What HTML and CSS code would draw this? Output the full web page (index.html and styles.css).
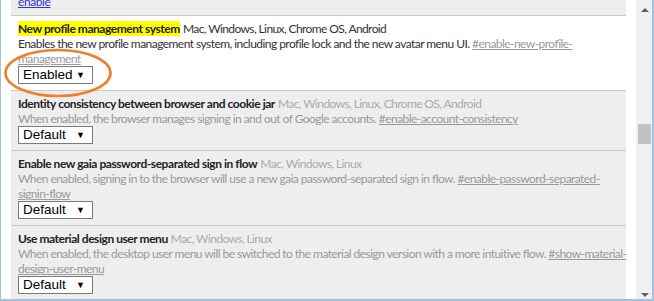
FILE: index.html
```html
<!DOCTYPE html>
<html>
<head>
<meta charset="utf-8">
<link rel="stylesheet" href="styles.css">
</head>
<body>
<div class="window">
  <div class="viewport">
    <div class="panel">
      <div class="row row-top"><a class="link-blue" href="#">enable</a></div>
      <div class="row row-hl">
        <div class="line"><span class="title"><mark class="find">New profile management system</mark></span> <span class="platforms">Mac, Windows, Linux, Chrome OS, Android</span></div>
        <div class="desc">Enables the new profile management system, including profile lock and the new avatar menu UI. <a class="permalink" href="#">#enable-new-profile-<br>management</a></div>
        <div class="select"><span class="select-text">Enabled</span><span class="arrow">▼</span></div>
      </div>
      <div class="row">
        <div class="line"><span class="title">Identity consistency between browser and cookie jar</span> <span class="platforms">Mac, Windows, Linux, Chrome OS, Android</span></div>
        <div class="desc">When enabled, the browser manages signing in and out of Google accounts. <a class="permalink" href="#">#enable-account-consistency</a></div>
        <div class="select"><span class="select-text">Default</span><span class="arrow">▼</span></div>
      </div>
      <div class="row">
        <div class="line"><span class="title">Enable new gaia password-separated sign in flow</span> <span class="platforms">Mac, Windows, Linux</span></div>
        <div class="desc">When enabled, signing in to the browser will use a new gaia password-separated sign in flow. <a class="permalink" href="#">#enable-password-separated-<br>signin-flow</a></div>
        <div class="select"><span class="select-text">Default</span><span class="arrow">▼</span></div>
      </div>
      <div class="row">
        <div class="line"><span class="title">Use material design user menu</span> <span class="platforms">Mac, Windows, Linux</span></div>
        <div class="desc">When enabled, the desktop user menu will be switched to the material design version with a more intuitive flow. <a class="permalink" href="#">#show-material-<br>design-user-menu</a></div>
        <div class="select"><span class="select-text">Default</span><span class="arrow">▼</span></div>
      </div>
    </div>
  </div>
  <div class="scrollbar">
    <div class="sb-arrow up"></div>
    <div class="sb-track"><div class="sb-thumb"></div></div>
    <div class="sb-arrow down"></div>
  </div>
  <svg class="ring" width="112" height="52" viewBox="0 0 112 52"><ellipse cx="55" cy="25" rx="52.5" ry="23" fill="none" stroke="#ee7f2d" stroke-width="2.6"/></svg>
</div>
</body>
</html>
```

FILE: styles.css
```css
* { box-sizing: border-box; }
html, body { margin: 0; padding: 0; background: #fff; }
body { font-family: "Lato", "Open Sans", sans-serif; font-size: 12px; }

.window {
  position: relative;
  width: 654px;
  height: 301px;
  display: flex;
  border-left: 1px solid #9ec2e6;
  border-right: 2px solid #9ec2e6;
  border-bottom: 2px solid #9ec2e6;
  overflow: hidden;
  background: #fff;
}

.viewport {
  padding-left: 10px;
  width: 635px;
  flex: none;
  overflow: hidden;
}

.panel {
  width: 615px;
  background: #eee;
  min-height: 100%;
}

.row {
  border-top: 1px solid #ccc;
  padding: 5px 2px 6px 7px;
  background: #eee;
  line-height: 15px;
}
.row-top {
  border-top: none;
  margin-top: -6px;
  padding-top: 0;
  letter-spacing: -0.4px;
}
.row-hl { background: #fff; }

.link-blue { color: #3333cc; text-decoration: underline; }

.title { font-weight: bold; color: #222; letter-spacing: -0.45px; }
.find { background: #ffff00; color: #222; padding: 0; }
.platforms { color: #aaa; letter-spacing: -0.6px; }
.row-hl .platforms { color: #333; }
.desc { color: #999; letter-spacing: -0.55px; white-space: nowrap; }
.row-hl .desc { color: #333; }
.permalink { color: #999; text-decoration: underline; }

.select {
  display: flex;
  align-items: center;
  width: 75px;
  height: 18px;
  border: 1px solid #7a7a7a;
  background: #fff;
  font-family: "Liberation Sans", Arial, sans-serif;
  font-size: 13.5px;
  color: #000;
  padding-left: 4px;
}
.select-text { flex: 1; line-height: 16px; }
.arrow { font-size: 9px; margin-right: 7px; line-height: 16px; }

.scrollbar {
  flex: none;
  width: 17px;
  background: #f0f0f0;
  display: flex;
  flex-direction: column;
}
.sb-arrow { height: 17px; position: relative; }
.sb-arrow::after {
  content: "";
  position: absolute;
  left: 5px;
  border-left: 4px solid transparent;
  border-right: 4px solid transparent;
}
.sb-arrow.up::after { top: 8px; border-bottom: 4px solid #606060; }
.sb-arrow.down::after { top: 11px; border-top: 4px solid #606060; }
.sb-track { flex: 1; padding-top: 107px; }
.sb-thumb { width: 13px; height: 20px; margin-left: 2px; background: #c2c2c2; }

.ring { position: absolute; left: 2px; top: 48px; }
```
